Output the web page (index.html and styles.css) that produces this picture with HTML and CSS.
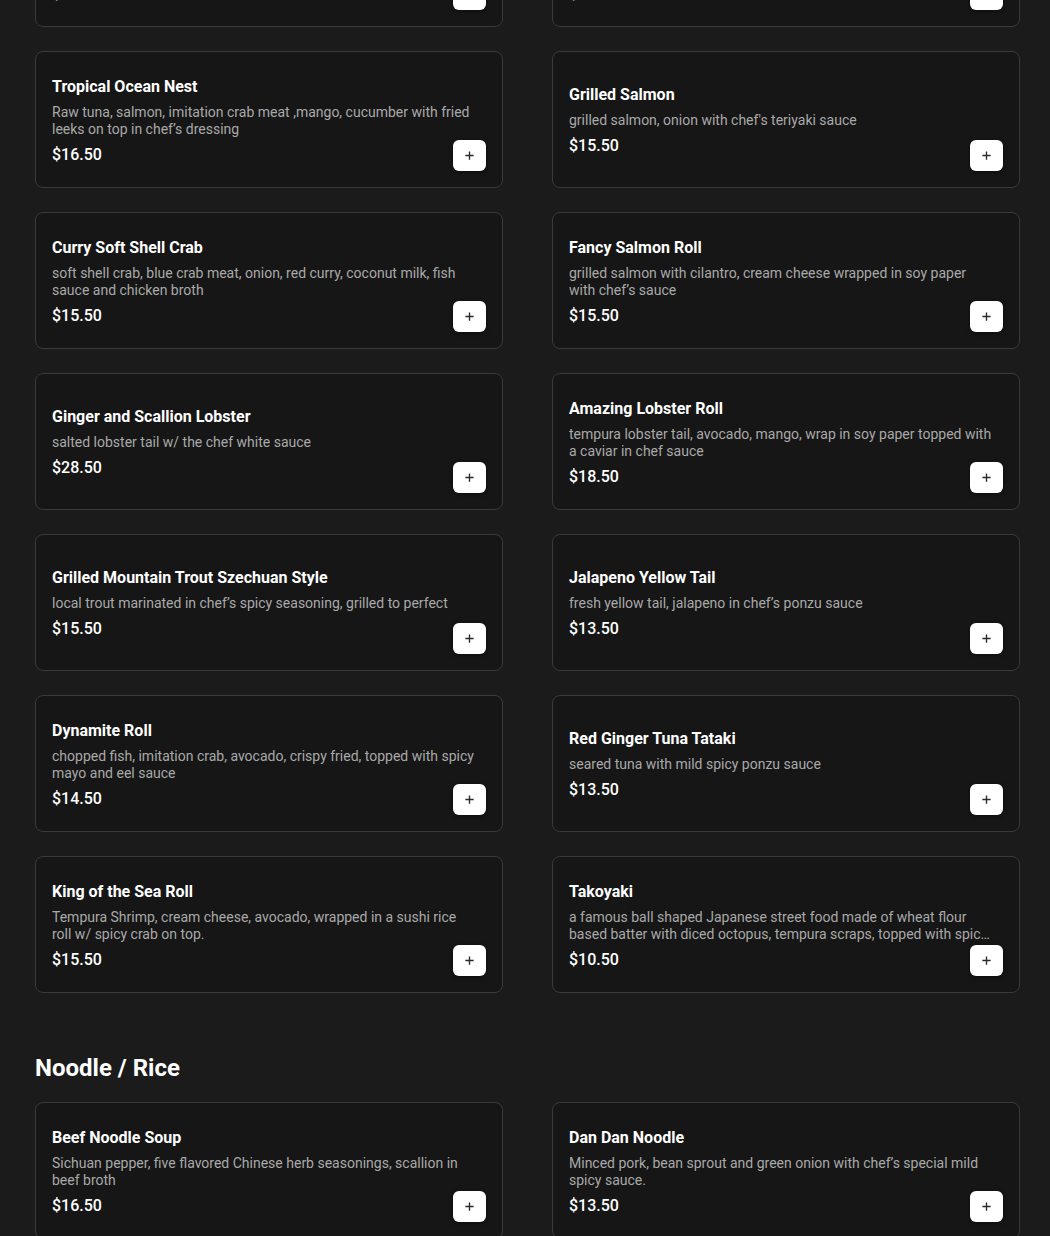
FILE: index.html
```html
<!DOCTYPE html>
<html>
<head>
<meta charset="utf-8">
<link rel="stylesheet" href="styles.css">
</head>
<body>
<main class="menu">
  <section class="section">
    <div class="grid">
      <div class="card"><div class="info"><div class="name">Spicy Tuna Crunch Roll</div><div class="desc">spicy tuna, cucumber, tempura flakes, avocado on top with eel sauce and spicy mayo</div><div class="price">$15.50</div></div><button class="add"><svg viewBox="0 0 12 12"><path d="M6 1.5v9M1.5 6h9"/></svg></button></div>
      <div class="card"><div class="info"><div class="name">Rainbow Roll</div><div class="desc">crab meat, cucumber, avocado topped with tuna, salmon, white fish and shrimp</div><div class="price">$15.50</div></div><button class="add"><svg viewBox="0 0 12 12"><path d="M6 1.5v9M1.5 6h9"/></svg></button></div>

      <div class="card"><div class="info"><div class="name">Tropical Ocean Nest</div><div class="desc">Raw tuna, salmon, imitation crab meat ,mango, cucumber with fried leeks on top in chef’s dressing</div><div class="price">$16.50</div></div><button class="add"><svg viewBox="0 0 12 12"><path d="M6 1.5v9M1.5 6h9"/></svg></button></div>
      <div class="card"><div class="info"><div class="name">Grilled Salmon</div><div class="desc">grilled salmon, onion with chef's teriyaki sauce</div><div class="price">$15.50</div></div><button class="add"><svg viewBox="0 0 12 12"><path d="M6 1.5v9M1.5 6h9"/></svg></button></div>

      <div class="card"><div class="info"><div class="name">Curry Soft Shell Crab</div><div class="desc">soft shell crab, blue crab meat, onion, red curry, coconut milk, fish sauce and chicken broth</div><div class="price">$15.50</div></div><button class="add"><svg viewBox="0 0 12 12"><path d="M6 1.5v9M1.5 6h9"/></svg></button></div>
      <div class="card"><div class="info"><div class="name">Fancy Salmon Roll</div><div class="desc">grilled salmon with cilantro, cream cheese wrapped in soy paper with chef’s sauce</div><div class="price">$15.50</div></div><button class="add"><svg viewBox="0 0 12 12"><path d="M6 1.5v9M1.5 6h9"/></svg></button></div>

      <div class="card"><div class="info"><div class="name">Ginger and Scallion Lobster</div><div class="desc">salted lobster tail w/ the chef white sauce</div><div class="price">$28.50</div></div><button class="add"><svg viewBox="0 0 12 12"><path d="M6 1.5v9M1.5 6h9"/></svg></button></div>
      <div class="card"><div class="info"><div class="name">Amazing Lobster Roll</div><div class="desc">tempura lobster tail, avocado, mango, wrap in soy paper topped with a caviar in chef sauce</div><div class="price">$18.50</div></div><button class="add"><svg viewBox="0 0 12 12"><path d="M6 1.5v9M1.5 6h9"/></svg></button></div>

      <div class="card"><div class="info"><div class="name">Grilled Mountain Trout Szechuan Style</div><div class="desc">local trout marinated in chef’s spicy seasoning, grilled to perfect</div><div class="price">$15.50</div></div><button class="add"><svg viewBox="0 0 12 12"><path d="M6 1.5v9M1.5 6h9"/></svg></button></div>
      <div class="card"><div class="info"><div class="name">Jalapeno Yellow Tail</div><div class="desc">fresh yellow tail, jalapeno in chef’s ponzu sauce</div><div class="price">$13.50</div></div><button class="add"><svg viewBox="0 0 12 12"><path d="M6 1.5v9M1.5 6h9"/></svg></button></div>

      <div class="card"><div class="info"><div class="name">Dynamite Roll</div><div class="desc">chopped fish, imitation crab, avocado, crispy fried, topped with spicy mayo and eel sauce</div><div class="price">$14.50</div></div><button class="add"><svg viewBox="0 0 12 12"><path d="M6 1.5v9M1.5 6h9"/></svg></button></div>
      <div class="card"><div class="info"><div class="name">Red Ginger Tuna Tataki</div><div class="desc">seared tuna with mild spicy ponzu sauce</div><div class="price">$13.50</div></div><button class="add"><svg viewBox="0 0 12 12"><path d="M6 1.5v9M1.5 6h9"/></svg></button></div>

      <div class="card"><div class="info"><div class="name">King of the Sea Roll</div><div class="desc">Tempura Shrimp, cream cheese, avocado, wrapped in a sushi rice roll w/ spicy crab on top.</div><div class="price">$15.50</div></div><button class="add"><svg viewBox="0 0 12 12"><path d="M6 1.5v9M1.5 6h9"/></svg></button></div>
      <div class="card"><div class="info"><div class="name">Takoyaki</div><div class="desc">a famous ball shaped Japanese street food made of wheat flour based batter with diced octopus, tempura scraps, topped with spicy mayo, eel sauce and bonito flakes</div><div class="price">$10.50</div></div><button class="add"><svg viewBox="0 0 12 12"><path d="M6 1.5v9M1.5 6h9"/></svg></button></div>
    </div>
  </section>

  <section class="section">
    <h2 class="heading">Noodle / Rice</h2>
    <div class="grid">
      <div class="card"><div class="info"><div class="name">Beef Noodle Soup</div><div class="desc">Sichuan pepper, five flavored Chinese herb seasonings, scallion in beef broth</div><div class="price">$16.50</div></div><button class="add"><svg viewBox="0 0 12 12"><path d="M6 1.5v9M1.5 6h9"/></svg></button></div>
      <div class="card"><div class="info"><div class="name">Dan Dan Noodle</div><div class="desc">Minced pork, bean sprout and green onion with chef’s special mild spicy sauce.</div><div class="price">$13.50</div></div><button class="add"><svg viewBox="0 0 12 12"><path d="M6 1.5v9M1.5 6h9"/></svg></button></div>
    </div>
  </section>
</main>
</body>
</html>
```

FILE: styles.css
```css
html, body {
  margin: 0;
  padding: 0;
  background: #1b1b1b;
  font-family: Roboto, "Liberation Sans", Arial, sans-serif;
  color: #ffffff;
  overflow: hidden;
}

.menu {
  margin-top: -110px;
  padding: 0 30px 0 35px;
}

.section + .section {
  margin-top: 55px;
}

.heading {
  margin: 0 0 14px 0;
  font-size: 24px;
  line-height: 40px;
  font-weight: 700;
  color: #ffffff;
}

.grid {
  display: grid;
  grid-template-columns: 468px 468px;
  column-gap: 49px;
  row-gap: 24px;
}

.card {
  box-sizing: border-box;
  height: 137px;
  padding: 16px;
  border: 1px solid #3a3a3a;
  border-radius: 8px;
  background: #161616;
  display: grid;
  grid-template-columns: 1fr;
  grid-template-rows: 1fr;
}

.info {
  grid-area: 1 / 1;
  align-self: center;
  padding-top: 2px;
  padding-right: 8px;
  min-width: 0;
}

.name {
  font-size: 16px;
  line-height: 24px;
  font-weight: 700;
  color: #ffffff;
  margin-bottom: 5px;
}

.desc {
  font-size: 14px;
  line-height: 17px;
  color: #a9a9a9;
  margin-bottom: 5px;
  display: -webkit-box;
  -webkit-line-clamp: 2;
  -webkit-box-orient: vertical;
  overflow: hidden;
}

.price {
  font-size: 16px;
  line-height: 24px;
  font-weight: 500;
  color: #ffffff;
}

.add {
  grid-area: 1 / 1;
  justify-self: end;
  align-self: end;
  width: 33px;
  height: 31px;
  padding: 0;
  border: none;
  border-radius: 6px;
  background: #ffffff;
  box-shadow: 0 1px 4px rgba(0, 0, 0, 0.5);
  display: flex;
  align-items: center;
  justify-content: center;
  cursor: pointer;
}

.add svg {
  width: 11px;
  height: 11px;
  fill: none;
  stroke: #2b2b2b;
  stroke-width: 1.5;
}
```
